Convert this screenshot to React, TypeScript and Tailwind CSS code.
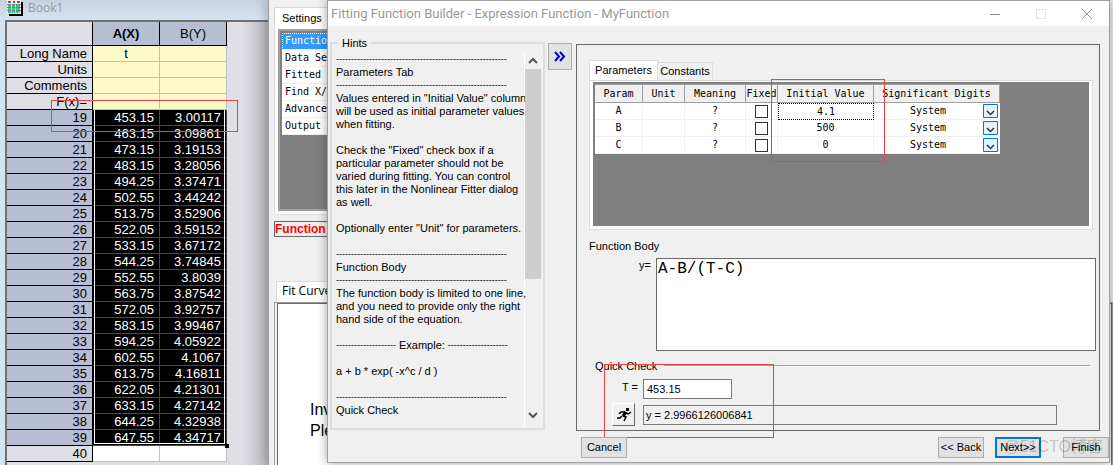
import React, { useState } from 'react';

const SHEET_ROWS = [
  [19, '453.15', '3.00117'],
  [20, '463.15', '3.09861'],
  [21, '473.15', '3.19153'],
  [22, '483.15', '3.28056'],
  [23, '494.25', '3.37471'],
  [24, '502.55', '3.44242'],
  [25, '513.75', '3.52906'],
  [26, '522.05', '3.59152'],
  [27, '533.15', '3.67172'],
  [28, '544.25', '3.74845'],
  [29, '552.55', '3.8039'],
  [30, '563.75', '3.87542'],
  [31, '572.05', '3.92757'],
  [32, '583.15', '3.99467'],
  [33, '594.25', '4.05922'],
  [34, '602.55', '4.1067'],
  [35, '613.75', '4.16811'],
  [36, '622.05', '4.21301'],
  [37, '633.15', '4.27142'],
  [38, '644.25', '4.32938'],
  [39, '647.55', '4.34717'],
];

const LABEL_ROWS = [
  ['Long Name', 't'],
  ['Units', ''],
  ['Comments', ''],
  ['F(x)=', ''],
];

const SETTINGS = ['Function', 'Data Sel', 'Fitted C', 'Find X/Y', 'Advance', 'Output'];

const PARAMS = [
  { name: 'A', value: '4.1' },
  { name: 'B', value: '500' },
  { name: 'C', value: '0' },
];

const RULE = '-'.repeat(57);
const SHORT_RULE = '-'.repeat(20);

const HINTS = [
  RULE,
  'Parameters Tab',
  RULE,
  'Values entered in "Initial Value" column',
  'will be used as initial parameter values',
  'when fitting.',
  '',
  'Check the "Fixed" check box if a',
  'particular parameter should not be',
  'varied during fitting. You can control',
  'this later in the Nonlinear Fitter dialog',
  'as well.',
  '',
  'Optionally enter "Unit" for parameters.',
  '',
  RULE,
  'Function Body',
  RULE,
  'The function body is limited to one line,',
  'and you need to provide only the right',
  'hand side of the equation.',
  '',
  'EXAMPLE',
  '',
  'a + b * exp( -x^c / d )',
  '',
  RULE,
  'Quick Check',
];

const SheetIcon = () => (
  <svg width="17" height="16" viewBox="0 0 17 16" shapeRendering="crispEdges">
    <path d="M2 2h14v14H2z" fill="#000" />
    <path d="M0 0h14v14H0z" fill="#fff" />
    <path d="M1 1h3v2H1zM6 1h2v2H6zM10 1h3v2h-3z" fill="#e0303a" />
    <path d="M1 5h3v2H1zM5 5h3v2H5zM9 5h4v2H9zM1 8h3v2H1zM5 8h3v2H5zM9 8h4v2H9zM1 11h3v2H1zM5 11h3v2H5zM9 11h4v2H9z" fill="#30d860" />
    <path d="M0 4h14v1H0zM0 7h14v1H0zM0 10h14v1H0z" fill="#7a6ac0" />
    <path d="M4 4h1v10H4zM8 4h1v10H8z" fill="#c0c8f0" />
  </svg>
);

const RunnerIcon = () => (
  <svg width="16" height="14" viewBox="0 0 16 14" fill="none" stroke="#000" strokeWidth="2">
    <path d="M10 0h3v3h-3z" fill="#000" stroke="none" />
    <path d="M10 4L7 8" strokeWidth="3" />
    <path d="M9 4H5L3 6M10 5l2 1 3-2M7 8l3 1-2 4M6 8l-2 2H1" strokeWidth="1.5" />
  </svg>
);

const Book: React.FC = () => (
  <section className="absolute inset-y-0 left-0 flex w-[268px] flex-col overflow-hidden bg-[#d6e4f1]">
    <header className="flex h-5 shrink-0 items-start gap-1 bg-linear-to-b from-[#c5d3e0] to-[#d6e4f1] pl-[7px]">
      <SheetIcon />
      <h1 className="font-['Open_Sans',sans-serif] text-[12px] leading-4 text-[#999]">Book1</h1>
    </header>
    <div className="relative ml-[5px] flex-1 border-t-2 border-l-2 border-[#707070] bg-linear-to-r from-[#e0dfe5] from-90% to-[#b8b7bd]">
      <table className="w-[220px] table-fixed border-separate border-spacing-0 text-right text-[13px] leading-[15px]">
        <colgroup>
          <col className="w-[86px]" />
          <col className="w-[67px]" />
          <col className="w-[67px]" />
        </colgroup>
        <thead>
          <tr className="h-6 text-center">
            <td className="border-r border-b border-black" />
            <th className="border-r border-b border-black bg-[#b7bed4] font-bold">A(X)</th>
            <th className="border-r border-b border-black bg-[#b7bed4] font-normal">B(Y)</th>
          </tr>
        </thead>
        <tbody>
          {LABEL_ROWS.map(([label, value]) => (
            <tr key={label} className="h-4">
              <th className="border-r border-b border-black p-0 pr-[5px] font-normal">{label}</th>
              <td className="border-r border-b border-[#c0c0c0] bg-[#fbfac8] p-0 text-center">{value}</td>
              <td className="border-r border-b border-[#c0c0c0] bg-[#fbfac8] p-0" />
            </tr>
          ))}
          {SHEET_ROWS.map(([row, x, y]) => (
            <tr key={row} className="h-4">
              <th className="border-r border-b border-black bg-[#b7bed4] p-0 pr-[5px] font-normal">{row}</th>
              <td className="border-r border-b border-[#484848] bg-black p-0 pr-[5px] text-white">{x}</td>
              <td className="border-r border-b border-[#484848] bg-black p-0 pr-[5px] text-white">{y}</td>
            </tr>
          ))}
          <tr className="h-4">
            <th className="border-r border-b border-black p-0 pr-[5px] font-normal">40</th>
            <td className="border-r border-b border-[#c0c0c0] bg-white p-0" />
            <td className="border-r border-b border-[#c0c0c0] bg-white p-0" />
          </tr>
        </tbody>
      </table>
      {/* selection frame and its fill handle */}
      <div className="absolute top-[88px] left-[87px] h-[334px] w-[131px] border border-t-0 border-white" />
      <div className="absolute top-[422px] left-[218px] h-1 w-1 bg-black" />
      <div className="absolute top-[78px] left-11 h-8 w-[187px] border border-[#f04040]" />
    </div>
  </section>
);

const FitDialog: React.FC = () => (
  <section className="absolute inset-y-0 right-0 left-[268px] overflow-hidden border-l border-[#a0a0a0] bg-[#f0f0f0] pl-[5px] shadow-[-3px_0_10px_#00000030]">
    <div className="mt-[7px] h-[208px] w-40 border border-[#dcdcdc] bg-white pr-1 pl-[3px] text-[11px]">
      <h2 className="h-[21px] pl-1 leading-5">Settings</h2>
      <div className="h-[182px] border-2 border-[#a0a0a0] bg-[#808080] pt-0.5 pl-0.5">
        <ul className="font-['DejaVu_Sans_Mono',monospace] text-[10px] leading-4">
          {SETTINGS.map((item, i) => (
            <li
              key={item}
              className={`h-[17px] border-b border-[#f0f0f0] pl-[3px] whitespace-nowrap ${i === 0 ? 'bg-[#3399ff] text-white outline-1 -outline-offset-1 outline-dotted outline-white' : 'bg-white'}`}
            >
              {item}
            </li>
          ))}
        </ul>
      </div>
    </div>
    <p className="mt-1.5 h-4 w-40 border border-[#696969] text-[12px] leading-[14px] font-bold text-[#f00]">Function</p>
    <h2 className="mt-11 ml-0.5 h-[21px] w-20 border border-b-0 border-[#dcdcdc] bg-white pl-[5px] font-['Open_Sans',sans-serif] text-[12px] leading-[18px] whitespace-nowrap">
      Fit Curve
    </h2>
    <div className="h-full border border-[#a0a0a0] pl-0.5">
      <div className="h-full border border-[#696969] bg-white pt-[95px] pl-8 text-[16px] leading-[21px]">
        <p>Inv</p>
        <p>Ple</p>
      </div>
    </div>
  </section>
);

const HintLine: React.FC<{ text: string }> = ({ text }) => {
  if (text === 'EXAMPLE') {
    return (
      <p className="flex h-[13px] gap-[3px]">
        <span className="text-[9px]">{SHORT_RULE}</span>
        Example:
        <span className="text-[9px]">{SHORT_RULE}</span>
      </p>
    );
  }
  return <p className={`h-[13px] whitespace-nowrap ${text === RULE ? 'text-[9px]' : ''}`}>{text}</p>;
};

const Hints: React.FC = () => (
  <section className="relative flex h-[388px] w-[215px] shrink-0 border-2 border-[#dcdcdc] pt-2">
    <h2 className="absolute -top-2 left-1.5 bg-[#f0f0f0] px-1 leading-[14px]">Hints</h2>
    <div className="min-w-0 flex-1 border-r border-white pt-px pl-1 leading-[13px]">
      {HINTS.map((line, i) => (
        <HintLine key={i} text={line} />
      ))}
    </div>
    <div className="mr-0.5 flex w-4 shrink-0 flex-col items-center">
      <svg width="16" height="17" fill="none" stroke="#555" strokeWidth="2">
        <path d="M4 11l4-4 4 4" />
      </svg>
      <div className="h-[210px] w-full bg-[#cdcdcd]" />
      <svg className="mt-auto mb-1" width="16" height="17" fill="none" stroke="#555" strokeWidth="2">
        <path d="M4 6l4 4 4-4" />
      </svg>
    </div>
  </section>
);

const ParamTable: React.FC = () => (
  <table className="w-[405px] table-fixed border-separate border-spacing-0 bg-white text-center font-['DejaVu_Sans_Mono',monospace] text-[10px] leading-4">
    <colgroup>
      <col className="w-12" />
      <col className="w-[42px]" />
      <col className="w-[61px]" />
      <col className="w-8" />
      <col className="w-24" />
      <col className="w-[126px]" />
    </colgroup>
    <thead>
      <tr className="h-[19px] bg-[#f0f0f0]">
        {['Param', 'Unit', 'Meaning', 'Fixed', 'Initial Value', 'Significant Digits'].map((h) => (
          <th key={h} className="border-t border-r border-b border-[#a0a0a0] p-0 font-normal whitespace-nowrap">
            {h}
          </th>
        ))}
      </tr>
    </thead>
    <tbody>
      {PARAMS.map(({ name, value }, i) => (
        <tr key={name} className="h-[17px]">
          <td className="border-r border-b border-[#f0f0f0] p-0">{name}</td>
          <td className="border-r border-b border-[#f0f0f0] p-0" />
          <td className="border-r border-b border-[#f0f0f0] p-0">?</td>
          <td className="border-r border-b border-[#f0f0f0] p-0">
            <input
              type="checkbox"
              aria-label={`Fixed ${name}`}
              className="mx-auto block h-[13px] w-[13px] appearance-none border border-[#333] bg-white checked:bg-[#333]"
            />
          </td>
          <td className={`p-0 ${i === 0 ? 'border border-dotted border-black leading-[14px]' : 'border-r border-b border-[#f0f0f0]'}`}>
            {value}
          </td>
          <td className="border-b border-[#f0f0f0] p-0">
            <div className="relative flex h-4 items-center">
              <select
                aria-label={`Significant digits ${name}`}
                className="h-4 w-full appearance-none bg-transparent pl-9 text-left leading-4"
              >
                <option>System</option>
              </select>
              <svg className="pointer-events-none absolute right-0.5" width="15" height="14" fill="none">
                <path d="M.5.5h14v13H.5z" fill="#e5f1fb" stroke="#0078d7" />
                <path d="M4 7l3.5 3.5L11 7" stroke="#333" strokeWidth="1.5" />
              </svg>
            </div>
          </td>
        </tr>
      ))}
    </tbody>
  </table>
);

const BuilderPanel: React.FC = () => {
  const [body, setBody] = useState('A-B/(T-C)');
  const [t, setT] = useState('453.15');

  return (
    <section className="mt-0.5 ml-1 h-[387px] min-w-0 flex-1 border border-[#696969] pr-[3px] pl-3">
      <div className="mr-[3px] pt-[15px]">
        <div className="flex items-end" role="tablist">
          <button role="tab" aria-selected="true" className="h-5 w-[69px] border border-b-0 border-[#dcdcdc] bg-white">
            Parameters
          </button>
          <button role="tab" aria-selected="false" className="h-[18px] w-[55px] border border-b-0 border-l-0 border-[#dcdcdc]">
            Constants
          </button>
        </div>
        <div className="relative border border-[#dcdcdc] bg-white p-[3px] pt-px">
          <div className="h-[144px] border-t-2 border-l-2 border-[#808080] bg-[#808080]">
            <ParamTable />
          </div>
          <div className="absolute -top-0.5 left-[181px] h-[83px] w-[114px] border border-[#f04040]" />
        </div>
      </div>

      <label htmlFor="body" className="mt-2 block leading-4">
        Function Body
      </label>
      <div className="mt-1 flex">
        <label htmlFor="body" className="w-[67px] pr-[5px] text-right leading-[14px]">
          y=
        </label>
        <textarea
          id="body"
          value={body}
          onChange={(e) => setBody(e.target.value)}
          className="h-[93px] min-w-0 flex-1 resize-none border border-[#696969] bg-white px-px font-['Liberation_Mono',monospace] text-[16px] leading-5"
        />
      </div>

      <div className="relative">
        <div className="mt-[7px] flex items-center pr-1.5 pl-1.5">
          <h2 className="w-[69px] leading-4 whitespace-nowrap">Quick Check</h2>
          <div className="h-0.5 flex-1 border-t border-[#a0a0a0] bg-white" />
        </div>
        <div className="mt-[5px] flex">
          <label htmlFor="t-value" className="w-[54px] pr-[5px] text-right leading-4">
            T =
          </label>
          <input
            id="t-value"
            value={t}
            onChange={(e) => setT(e.target.value)}
            className="h-5 w-[89px] border border-[#7a7a7a] bg-white px-[3px]"
          />
        </div>
        <div className="mt-1 flex items-center pr-[39px]">
          <button
            aria-label="Evaluate"
            className="mr-2 ml-[23px] flex h-[23px] w-[23px] shrink-0 items-center justify-center border border-t-white border-r-[#696969] border-b-[#696969] border-l-white"
          >
            <RunnerIcon />
          </button>
          <output className="h-5 flex-1 border border-[#7a7a7a] px-0.5 leading-[18px]">y = 2.9966126006841</output>
        </div>
        <div className="absolute top-1.5 left-[15px] h-[74px] w-[170px] border border-[#f04040]" />
      </div>
    </section>
  );
};

const BuilderDialog: React.FC = () => (
  <section className="absolute top-0 right-[3px] left-[327px] border border-[#a0a0a0] bg-[#f0f0f0] text-[11px] shadow-[0_0_10px_#00000060]">
    <header className="flex h-[25px] items-center bg-white pl-[3px]">
      <h1 className="flex-1 font-[Roboto,sans-serif] text-[13px] whitespace-nowrap text-[#999]">
        Fitting Function Builder - Expression Function - MyFunction
      </h1>
      <div className="flex gap-9 pr-[17px]">
        <button aria-label="Minimize">
          <svg width="10" height="10" stroke="#888">
            <path d="M0 5.5h10" />
          </svg>
        </button>
        <button aria-label="Maximize">
          <svg width="10" height="10" fill="none" stroke="#e4e4e4">
            <path d="M.5.5h9v9h-9z" />
          </svg>
        </button>
        <button aria-label="Close">
          <svg width="10" height="10" stroke="#999">
            <path d="M0 0l10 10M10 0L0 10" />
          </svg>
        </button>
      </div>
    </header>
    <div className="flex pt-4 pr-[9px] pl-0.5">
      <Hints />
      <button
        aria-label="Collapse hints"
        className="mt-px ml-[3px] flex h-[27px] w-6 shrink-0 items-center justify-center border border-[#adadad] bg-[#e1e1e1]"
      >
        <svg width="12" height="12" fill="none" stroke="#0000dd" strokeWidth="2">
          <path d="M1 1l4 4.500-4 4.500M6 1l4 4.500-4 4.500" />
        </svg>
      </button>
      <BuilderPanel />
    </div>
    <footer className="relative flex items-start pt-1.5 pb-1 pl-[253px]">
      <button className="mr-auto h-[21px] w-[46px] border border-[#adadad] bg-[#e1e1e1]">Cancel</button>
      <button className="mr-[11px] h-[21px] w-[46px] border border-[#adadad] bg-[#e1e1e1]">&lt;&lt; Back</button>
      <button className="mr-[22px] h-[21px] w-[46px] border-2 border-[#0078d7] bg-[#e1e1e1]">Next&gt;&gt;</button>
      <button className="h-[21px] w-[46px] border border-[#adadad] bg-[#e1e1e1]">Finish</button>
      <span className="pointer-events-none absolute top-1 right-1.5 font-['Liberation_Sans','Noto_Sans_CJK_SC',sans-serif] text-[16px] leading-6 text-black/20">
        @51CTO博客
      </span>
    </footer>
  </section>
);

export default function App() {
  return (
    <main className="relative h-screen overflow-hidden bg-[#b0b0b0] font-['Liberation_Sans',Arial,sans-serif] text-black">
      <Book />
      <FitDialog />
      <BuilderDialog />
    </main>
  );
}
